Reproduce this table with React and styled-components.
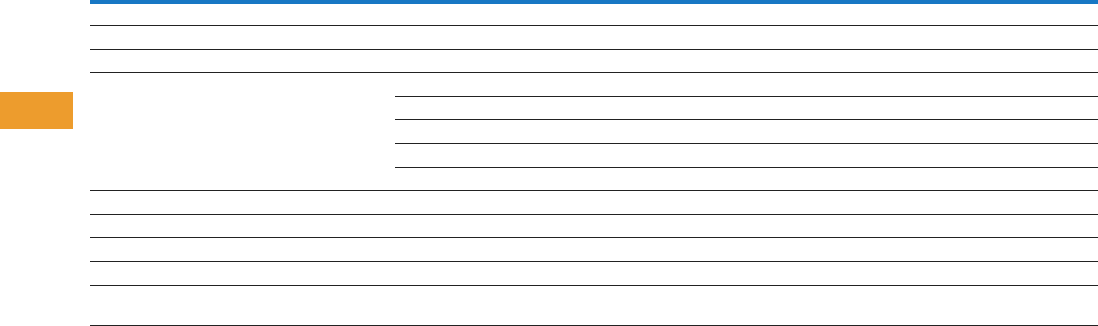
import React from 'react'
import styled, { createGlobalStyle } from 'styled-components'

const GlobalStyle = createGlobalStyle`
  html, body {
    margin: 0;
    padding: 0;
    background: #ffffff;
    font-family: "Liberation Sans", Arial, sans-serif;
  }
`

const Page = styled.div`
  display: flex;
  width: 1098px;
  height: 326px;
  overflow: hidden;
`

const Side = styled.div`
  width: 90px;
  flex-shrink: 0;
`

const Tab = styled.div`
  width: 73px;
  height: 37px;
  margin-top: 92px;
  background: #ed9c2d;
`

const Table = styled.table`
  flex: 1;
  border-collapse: separate;
  border-spacing: 0;
  border-top: 4px solid #1777c4;
  align-self: flex-start;
  table-layout: fixed;
`

const Cell = styled.td`
  box-sizing: border-box;
  padding: 0;
  height: ${p => p.$h || 23.6}px;
  border-bottom: 1px solid #222222;
  font-size: 12px;
  color: #222222;
`

const rowsBefore = [22, 23.6, 23.6]
const subRows = [23.6, 23.6, 23.6, 23.6, 23.6]
const rowsAfter = [23.6, 23.6, 23.6, 23.6, 40]

const App = () => {
  return (
    <Page>
      <GlobalStyle />
      <Side>
        <Tab />
      </Side>
      <Table>
        <colgroup>
          <col style={{ width: '305px' }} />
          <col />
        </colgroup>
        <tbody>
          {rowsBefore.map((h, i) => (
            <tr key={'a' + i}>
              <Cell colSpan={2} $h={h} />
            </tr>
          ))}
          {subRows.map((h, i) => (
            <tr key={'b' + i}>
              {i === 0 && <Cell rowSpan={subRows.length} $h={h} />}
              <Cell $h={h} />
            </tr>
          ))}
          {rowsAfter.map((h, i) => (
            <tr key={'c' + i}>
              <Cell colSpan={2} $h={h} />
            </tr>
          ))}
        </tbody>
      </Table>
    </Page>
  )
}

export default App
